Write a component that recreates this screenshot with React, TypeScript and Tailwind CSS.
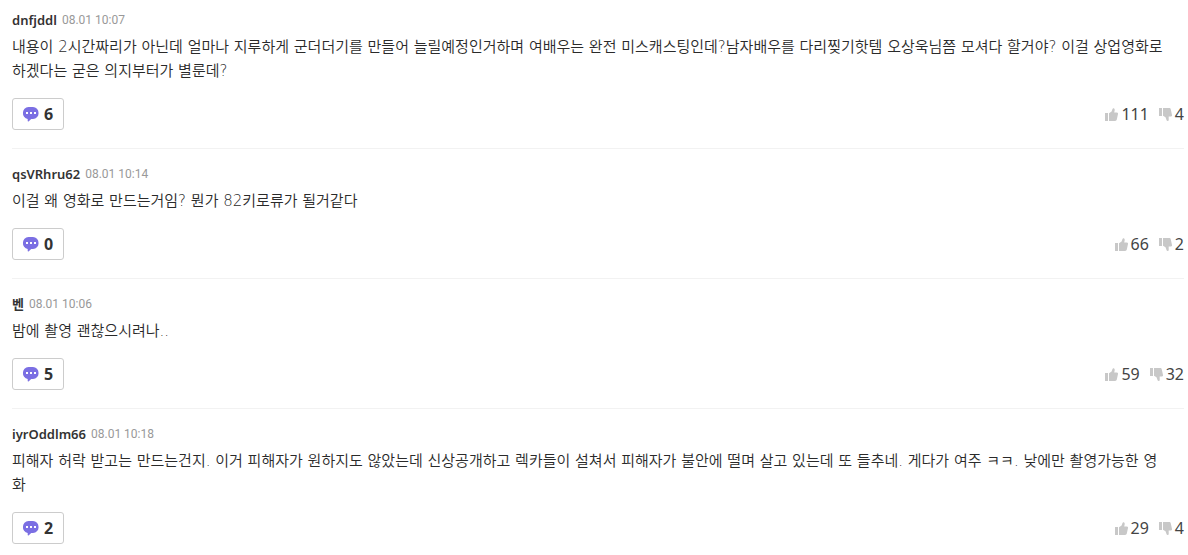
type Comment = {
  name: string;
  date: string;
  text: string;
  replies: number;
  likes: number;
  dislikes: number;
};

const comments: Comment[] = [
  {
    name: "dnfjddl",
    date: "08.01 10:07",
    text: "내용이 2시간짜리가 아닌데 얼마나 지루하게 군더더기를 만들어 늘릴예정인거하며 여배우는 완전 미스캐스팅인데?남자배우를 다리찢기핫템 오상욱님쯤 모셔다 할거야? 이걸 상업영화로\n하겠다는 굳은 의지부터가 별룬데?",
    replies: 6,
    likes: 111,
    dislikes: 4,
  },
  {
    name: "qsVRhru62",
    date: "08.01 10:14",
    text: "이걸 왜 영화로 만드는거임? 뭔가 82키로류가 될거같다",
    replies: 0,
    likes: 66,
    dislikes: 2,
  },
  {
    name: "벤",
    date: "08.01 10:06",
    text: "밤에 촬영 괜찮으시려나..",
    replies: 5,
    likes: 59,
    dislikes: 32,
  },
  {
    name: "iyrOddlm66",
    date: "08.01 10:18",
    text: "피해자 허락 받고는 만드는건지. 이거 피해자가 원하지도 않았는데 신상공개하고 렉카들이 설쳐서 피해자가 불안에 떨며 살고 있는데 또 들추네. 게다가 여주 ㅋㅋ. 낮에만 촬영가능한 영\n화",
    replies: 2,
    likes: 29,
    dislikes: 4,
  },
];

const BubbleIcon = () => (
  <svg className="h-4 w-4" viewBox="0 0 16 16" aria-hidden="true">
    <path
      fill="#7b6fe3"
      d="M5.5 1h4.500a5.500 5.500 0 0 1 5.500 5.700A5.600 5.600 0 0 1 10 13H8.200l-2.700 2.400c-.4.300-.8.100-.8-.3V13A5.700 5.700 0 0 1 0 6.700 5.500 5.500 0 0 1 5.500 1Z"
    />
    <path fill="#fff" d="M3 6h2v2H3zM7 6h2v2H7zM11 6h2v2h-2z" />
  </svg>
);

const ThumbUpIcon = () => (
  <svg className="h-[13px] w-[13px]" viewBox="0 0 13 13" fill="#c8c8c8" aria-hidden="true">
    <path d="M0 5h3v8H0z" />
    <path d="M4 5.300 6.600 3.500 7.500.9C7.800.2 8.300 0 8.900.3c.7.4.9 1.100.8 1.900L9.200 4.500h2.600c.9 0 1.400.6 1.200 1.400l-1.200 5.700c-.2.9-.8 1.400-1.700 1.400H4z" />
  </svg>
);

const ThumbDownIcon = () => (
  <svg className="h-[13px] w-[13px]" viewBox="0 0 13 13" fill="#c8c8c8" aria-hidden="true">
    <path d="M0 0h3v8H0z" />
    <path d="M4 0h6.100c.9 0 1.500.5 1.700 1.400L13 7.100c.2.800-.3 1.400-1.200 1.400H9.700v3.400c0 .8-.5 1.100-1.100 1.100-.5 0-.8-.3-1-.8L6.500 9.300 4 7.700z" />
  </svg>
);

const CommentItem = ({ comment }: { comment: Comment }) => {
  const { name, date, text, replies, likes, dislikes } = comment;

  return (
    <li className="border-b border-[#f2f2f2] pt-[15px] pb-[18px] first:pt-[10px] last:border-b-0">
      <div className="flex items-center gap-[5px] leading-5">
        <strong className="text-[13px] font-semibold text-[#333]">{name}</strong>
        <time className="font-['Roboto','Noto_Sans_CJK_KR',sans-serif] text-[12px] text-[#999]">
          {date}
        </time>
      </div>
      <p className="mt-[5px] font-['DejaVu_Sans','Noto_Sans_CJK_KR',sans-serif] text-[15px] leading-6 font-[350] whitespace-pre-line text-[#2a2a2a]">
        {text}
      </p>
      <div className="mt-[15px] flex items-center justify-between">
        <button
          type="button"
          aria-label={`답글 ${replies}`}
          className="flex h-8 items-center gap-[5px] rounded-[3px] border border-[#ccc] px-[10px] text-[16px] font-bold text-[#333]"
        >
          <BubbleIcon />
          {replies}
        </button>
        <div className="flex items-center gap-[10px] text-[16px] text-[#444]">
          <button type="button" aria-label={`추천 ${likes}`} className="flex items-center gap-[3px]">
            <ThumbUpIcon />
            {likes}
          </button>
          <button type="button" aria-label={`비추천 ${dislikes}`} className="flex items-center gap-[3px]">
            <ThumbDownIcon />
            {dislikes}
          </button>
        </div>
      </div>
    </li>
  );
};

const App = () => (
  <main className="bg-white pr-1 pl-3 font-['Noto_Sans','Noto_Sans_CJK_KR',sans-serif]">
    <ul>
      {comments.map((comment) => (
        <CommentItem key={comment.name} comment={comment} />
      ))}
    </ul>
  </main>
);

export default App;
